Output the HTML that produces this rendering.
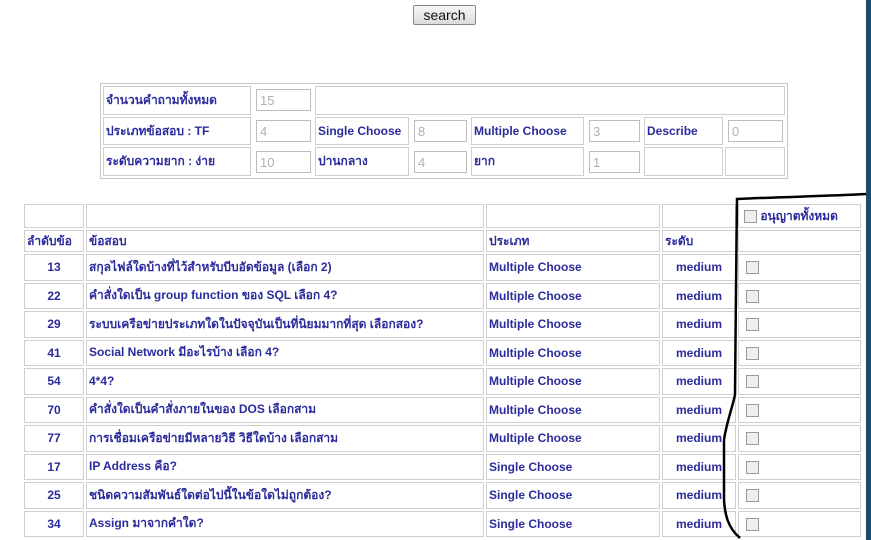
<!DOCTYPE html>
<html><head><meta charset="utf-8">
<style>
html,body{margin:0;padding:0;background:#fff;width:871px;height:540px;overflow:hidden;position:relative;font-family:"Liberation Sans","DejaVu Sans",sans-serif;}
.bar{position:absolute;right:0;top:0;width:5px;height:540px;background:#1d4b6b;}
.btn{position:absolute;left:413px;top:5px;width:63px;height:20px;border:1px solid #8a8a8a;border-radius:2px;background:linear-gradient(#f6f6f6,#dcdcdc);font-size:14px;line-height:18px;text-align:center;color:#111;box-sizing:border-box;}
table{border-collapse:separate;position:absolute;table-layout:fixed;}
td{border:1px solid #cfcfcf;padding:0 2px;font-size:12px;font-weight:bold;color:#2b2b9c;white-space:nowrap;overflow:hidden;box-sizing:border-box;}
#t1{left:100px;top:83px;border:1px solid #c8c8c8;border-spacing:2px;}
#t1 td{height:28.7px;}
.inp{display:block;height:22px;margin:0 2px 0 3px;border:1px solid #bdbdbd;color:#b0b0b0;font-weight:normal;font-size:13px;line-height:21px;padding-left:3px;box-sizing:border-box;}
#t1 td.i{border:none;padding:0;}
#t2{left:22px;top:202px;border-spacing:2px;}
#t2 td{height:26.5px;}
.c{text-align:center}
.cb{display:inline-block;width:11px;height:11px;border:1px solid #9a9a9a;background:#eee;vertical-align:middle;margin-left:5px;}
</style></head><body>
<div class="bar"></div>
<div class="btn">search</div>

<table id="t1">
<colgroup><col style="width:148px"><col style="width:60px"><col style="width:94px"><col style="width:58px"><col style="width:113px"><col style="width:56px"><col style="width:79px"><col style="width:60px"></colgroup>
<tr><td>จำนวนคำถามทั้งหมด</td><td class="i"><span class="inp">15</span></td><td colspan="6"></td></tr>
<tr><td>ประเภทข้อสอบ : TF</td><td class="i"><span class="inp">4</span></td><td>Single Choose</td><td class="i"><span class="inp">8</span></td><td>Multiple Choose</td><td class="i"><span class="inp">3</span></td><td>Describe</td><td class="i"><span class="inp">0</span></td></tr>
<tr><td>ระดับความยาก : ง่าย</td><td class="i"><span class="inp">10</span></td><td>ปานกลาง</td><td class="i"><span class="inp">4</span></td><td>ยาก</td><td class="i"><span class="inp">1</span></td><td></td><td></td></tr>
</table>

<table id="t2">
<colgroup><col style="width:60px"><col style="width:398px"><col style="width:174px"><col style="width:74px"><col style="width:123px"></colgroup>
<tr><td style="height:24px"></td><td style="height:24px"></td><td style="height:24px"></td><td style="height:24px"></td><td style="height:24px"><span class="cb" style="margin-left:3px"></span> อนุญาตทั้งหมด</td></tr>
<tr><td style="height:22px">ลำดับข้อ</td><td style="height:22px">ข้อสอบ</td><td style="height:22px">ประเภท</td><td style="height:22px">ระดับ</td><td style="height:22px"></td></tr>
<tr><td class="c">13</td><td>สกุลไฟล์ใดบ้างที่ไว้สำหรับบีบอัดข้อมูล (เลือก 2)</td><td>Multiple Choose</td><td class="c">medium</td><td><span class="cb"></span></td></tr>
<tr><td class="c">22</td><td>คำสั่งใดเป็น group function ของ SQL เลือก 4?</td><td>Multiple Choose</td><td class="c">medium</td><td><span class="cb"></span></td></tr>
<tr><td class="c">29</td><td>ระบบเครือข่ายประเภทใดในปัจจุบันเป็นที่นิยมมากที่สุด เลือกสอง?</td><td>Multiple Choose</td><td class="c">medium</td><td><span class="cb"></span></td></tr>
<tr><td class="c">41</td><td>Social Network มีอะไรบ้าง เลือก 4?</td><td>Multiple Choose</td><td class="c">medium</td><td><span class="cb"></span></td></tr>
<tr><td class="c">54</td><td>4*4?</td><td>Multiple Choose</td><td class="c">medium</td><td><span class="cb"></span></td></tr>
<tr><td class="c">70</td><td>คำสั่งใดเป็นคำสั่งภายในของ DOS เลือกสาม</td><td>Multiple Choose</td><td class="c">medium</td><td><span class="cb"></span></td></tr>
<tr><td class="c">77</td><td>การเชื่อมเครือข่ายมีหลายวิธี วิธีใดบ้าง เลือกสาม</td><td>Multiple Choose</td><td class="c">medium</td><td><span class="cb"></span></td></tr>
<tr><td class="c">17</td><td>IP Address คือ?</td><td>Single Choose</td><td class="c">medium</td><td><span class="cb"></span></td></tr>
<tr><td class="c">25</td><td>ชนิดความสัมพันธ์ใดต่อไปนี้ในข้อใดไม่ถูกต้อง?</td><td>Single Choose</td><td class="c">medium</td><td><span class="cb"></span></td></tr>
<tr><td class="c">34</td><td>Assign มาจากคำใด?</td><td>Single Choose</td><td class="c">medium</td><td><span class="cb"></span></td></tr>
</table>

<svg width="871" height="540" style="position:absolute;left:0;top:0" fill="none" stroke="#000" stroke-width="2.5">
<path d="M866,194 C830,196 780,197 737,199 L736,290 L735,395 C731,412 726,425 724,440 L724,500 C725,515 728,528 740,538"/>
</svg>
</body></html>
